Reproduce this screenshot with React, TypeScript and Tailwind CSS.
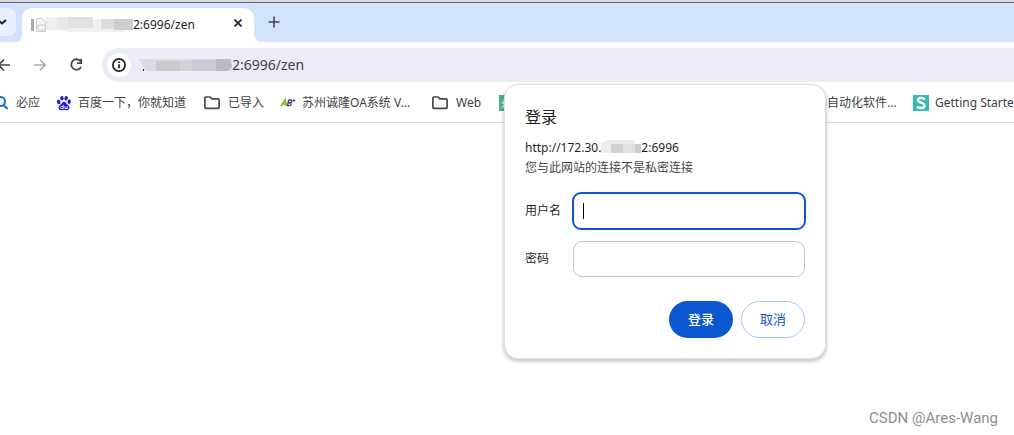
import React from "react";

type BookmarkProps = { icon: React.ReactNode; label: string; className: string };

const SearchIcon = () => (
  <svg className="h-4 w-4 shrink-0" viewBox="0 0 16 16" fill="none" stroke="#1a73c0" strokeWidth="2">
    <circle cx="8.500" cy="6.500" r="4.500" />
    <path d="M11.500 10 15.500 14" />
  </svg>
);

const BaiduIcon = () => (
  <svg className="h-4 w-4 shrink-0" viewBox="0 0 16 16" fill="#2319dc">
    <ellipse cx="2.700" cy="7" rx="1.800" ry="2.200" transform="rotate(-12 2.700 7)" />
    <ellipse cx="5.900" cy="3.200" rx="1.700" ry="2.300" />
    <ellipse cx="10.100" cy="3.200" rx="1.700" ry="2.300" transform="rotate(12 10.100 3.200)" />
    <ellipse cx="13.200" cy="6.700" rx="1.700" ry="2.200" transform="rotate(8 13.200 6.700)" />
    <path d="M8 6.700c1.600 0 2.200 1.600 3.200 2.700 1.200 1.100 2.500 1.800 2.300 3.600-.2 1.900-1.800 2.400-3.300 2.200-1.500-.2-2.800-.2-4.300 0-1.700.2-3.200-.6-3.300-2.300-.1-1.700.9-2.400 2.100-3.400C5.800 8.500 6.400 6.700 8 6.700Z" />
    <path d="M7.200 9.800v3.800H5.700a1 1 0 0 1 0-2.100h1.500M9 11.200v2.400h2.300v-2.400" fill="none" stroke="#fff" strokeWidth=".9" />
  </svg>
);

const FolderIcon = () => (
  <svg className="h-4 w-4 shrink-0" viewBox="0 0 16 16" fill="none" stroke="#47494d" strokeWidth="1.700">
    <path d="M.9 12.500V3.100c0-.7.4-1.100 1.100-1.100h4.200l1.700 1.900h6.100c.7 0 1.100.4 1.100 1.100v7.500c0 .6-.4.900-1 .9H1.900c-.6 0-1-.3-1-.9Z" />
  </svg>
);

const OaIcon = () => (
  <svg className="h-4 w-4 shrink-0" viewBox="0 0 16 16" fill="none">
    <path d="M1 11 5.200 4.800 6.200 11M3 9h3" stroke="#86b817" strokeWidth="1.700" />
    <path d="M8.700 5h1.900c1.900 0 1.500 2.700-.4 2.700H8.400h1.400c2.100 0 1.500 2.900-.5 2.900H7.600L8.700 5" stroke="#3c3f86" strokeWidth="1.400" />
    <path d="M12.700 5.500h2.600M14 4.200v2.600" stroke="#3c3f86" strokeWidth="1.100" />
  </svg>
);

const GreenIcon = () => (
  <svg className="h-4 w-4 shrink-0" viewBox="0 0 16 16">
    <path d="M0 0h16v16H0z" fill="#4bae94" />
    <path d="M3 13 6 9M3 7l3 3M5 4v3" stroke="#fff" strokeWidth="1.200" />
  </svg>
);

const SIcon = () => (
  <svg className="h-4 w-4 shrink-0" viewBox="0 0 16 16">
    <path d="M0 0h16v16H0z" fill="#34bcae" />
    <path d="M11.800 4.300C9.800 2.400 5 2.500 5 5.200c0 3 6.500 1.900 6.500 5.200 0 3.300-5.500 3.300-7.500 1.200" fill="none" stroke="#fff" strokeWidth="2.400" />
  </svg>
);

const Bookmark = ({ icon, label, className }: BookmarkProps) => (
  <a href="#" className={`flex h-6 shrink-0 items-center whitespace-nowrap ${className}`}>
    {icon}
    <span>{label}</span>
  </a>
);

const TabStrip = () => (
  <div className="flex h-[39px] items-end bg-[#d3e2fd]">
    <button aria-label="搜索标签页" className="mb-1.5 flex h-7 w-4 items-center justify-start rounded-r-lg bg-[#e9f0fe]">
      <svg className="h-2 w-2" viewBox="0 0 8 8" fill="none" stroke="#1f1f1f" strokeWidth="2">
        <path d="M-2 2 2 5.500 6 2" />
      </svg>
    </button>
    <svg className="-mr-1 h-2.5 w-2.5" viewBox="0 0 10 10" fill="#fff">
      <path d="M0 10C4 10 6 7 6 0h4v10Z" />
    </svg>
    <div className="flex h-[34px] w-[232px] items-center rounded-t-[10px] bg-white px-2">
      <svg className="h-4 w-[103px] shrink-0" viewBox="0 0 103 16">
        <path d="M1 2h3v12H1z" fill="#a9a9a9" />
        <path d="M6.500 1.500h6l3 3v10h-9zM8 8h7v5H8z" fill="#f5f5f5" stroke="#cfcfcf" />
        <path d="M16 0h47v2h40v10h-9v3H39l-9-2H16z" fill="#f0f0f0" />
        <path d="M27 1h11v11H27z" fill="#e8e8e8" />
        <path d="M38 0h25v11H38z" fill="#e1e1e1" />
        <path d="M71 2h13v10H71z" fill="#dcdcdc" />
        <path d="M84 2h19v11H84z" fill="#cecece" />
      </svg>
      <span className="flex-1 text-xs text-[#1f1f1f]">2:6996/zen</span>
      <button aria-label="关闭标签页" className="mb-1 flex h-4 w-4 items-center justify-center">
        <svg className="h-2 w-2" viewBox="0 0 8 8" stroke="#1f1f1f" strokeWidth="1.700">
          <path d="m.5.5 7 7m0-7-7 7" />
        </svg>
      </button>
    </div>
    <svg className="h-2.5 w-2.5" viewBox="0 0 10 10" fill="#fff">
      <path d="M0 0c0 7 3 10 10 10H0Z" />
    </svg>
    <button aria-label="新标签页" className="mb-2 ml-0.5 flex h-6 w-4 items-center justify-center">
      <svg className="h-3 w-3" viewBox="0 0 12 12" stroke="#474747" strokeWidth="1.600">
        <path d="M6 .5v11M.5 6h11" />
      </svg>
    </button>
  </div>
);

const Toolbar = () => (
  <div className="flex h-[43px] items-center pt-1 pb-0.5">
    <button aria-label="后退" className="flex h-6 w-3 items-center">
      <svg className="h-3 w-3" viewBox="0 0 12 12" fill="none" stroke="#474747" strokeWidth="1.700">
        <path d="M10 6H-1M4 .5-1.500 6 4 11.500" />
      </svg>
    </button>
    <button aria-label="前进" className="ml-5 flex h-6 w-4 items-center justify-center">
      <svg className="h-3 w-3" viewBox="0 0 12 12" fill="none" stroke="#ababab" strokeWidth="1.500">
        <path d="M0 6h11M6 .8 11.200 6 6 11.200" />
      </svg>
    </button>
    <button aria-label="重新加载" className="ml-5 flex h-6 w-4 items-center justify-center">
      <svg className="h-4 w-4" viewBox="0 0 16 16" fill="none" stroke="#474747" strokeWidth="1.800">
        <path d="M12.600 4.300A5.200 5.200 0 1 0 13 10M13.200 1.800v4.300H9" />
      </svg>
    </button>
    <div className="ml-[18px] flex h-[34px] flex-1 items-center rounded-l-full bg-[#e9edf7] pl-[5px]">
      <button aria-label="查看网站信息" className="flex h-6 w-6 items-center justify-center rounded-full bg-white">
        <svg className="h-4 w-4" viewBox="0 0 16 16" fill="none" stroke="#1f1f1f" strokeWidth="1.700">
          <circle cx="8" cy="8" r="6.100" />
          <path d="M8 7.200v4M8 4.400v1.700" />
        </svg>
      </button>
      <svg className="ml-2 h-4 w-[93px]" viewBox="0 0 93 16">
        <path d="M0 2h93v12H7z" fill="#d9dce3" />
        <path d="M17 4h24v10H17z" fill="#c8cacd" />
        <path d="M41 4h12v10H41z" fill="#d0d2d7" />
        <path d="M53 3h24v11H53z" fill="#c9cbd3" />
        <path d="M77 2h14l2 8-4 4H77z" fill="#b9bbc0" />
        <path d="M4 12h1v2H4z" fill="#333" />
      </svg>
      <span className="text-sm text-[#3f4145]">2:6996/zen</span>
    </div>
  </div>
);

const BookmarksBar = () => (
  <div className="flex h-[38px] items-center overflow-hidden border-b border-[#dcdcdc] pb-0.5 text-xs text-[#3f4145]">
    <Bookmark icon={<SearchIcon />} label="必应" className="-ml-2 w-16 gap-2" />
    <Bookmark icon={<BaiduIcon />} label="百度一下，你就知道" className="w-[148px] gap-1.5" />
    <Bookmark icon={<FolderIcon />} label="已导入" className="w-[76px] gap-2" />
    <Bookmark icon={<OaIcon />} label="苏州诚隆OA系统 V..." className="w-[152px] gap-1.5" />
    <Bookmark icon={<FolderIcon />} label="Web" className="w-[67px] gap-2" />
    <Bookmark icon={<GreenIcon />} label="" className="w-[316px] gap-2" />
    <Bookmark icon={null} label="和自动化软件..." className="w-[98px]" />
    <Bookmark icon={<SIcon />} label="Getting Started" className="gap-1.5" />
  </div>
);

const LoginDialog = () => (
  <form
    role="dialog"
    aria-label="登录"
    className="absolute top-[84px] left-[504px] w-[322px] rounded-[14px] border border-[#dfe1e0] bg-white py-5 pr-[19px] pl-5 text-xs text-[#1f1f1f] shadow-[0_2px_3px_1px_rgba(60,64,67,0.25)]"
  >
    <h1 className="text-base leading-6">登录</h1>
    <div className="mt-[9px] flex h-5 items-center">
      <span>http://172.30.</span>
      <svg className="h-4 w-10" viewBox="0 0 40 16">
        <path d="M0 3 8 0h26v4h6v9H0z" fill="#ededeb" />
        <path d="M10 4h12v9H10z" fill="#ccd2d5" />
        <path d="M22 4h12v9H22z" fill="#e2e1e2" />
        <path d="M34 4h6v9h-6z" fill="#c9ced0" />
      </svg>
      <span>2:6996</span>
    </div>
    <p className="h-5 leading-5 text-[#474747]">您与此网站的连接不是私密连接</p>
    <div className="mt-3.5 flex h-[38px] items-center">
      <label htmlFor="username" className="w-[47px]">用户名</label>
      <div className="relative flex-1">
        <input id="username" type="text" className="block h-[38px] w-full rounded-[9px] border-2 border-[#0b57d0] px-2 outline-none" />
        <span className="absolute top-[11px] left-[11px] h-4 w-px bg-black" />
      </div>
    </div>
    <div className="mt-[11px] flex h-9 items-center">
      <label htmlFor="password" className="w-12">密码</label>
      <input id="password" type="password" className="mr-px h-9 min-w-0 flex-1 rounded-[9px] border border-[#c7c7c7] px-2 outline-none" />
    </div>
    <div className="mt-6 mr-px flex justify-end gap-2 text-[13px]">
      <button type="button" className="h-[37px] w-16 rounded-full bg-[#0b57d0] font-medium text-white">登录</button>
      <button type="button" className="h-[37px] w-16 rounded-full border border-[#a8c7fa] text-[#0b57d0]">取消</button>
    </div>
  </form>
);

const App = () => (
  <div className="relative flex min-h-screen flex-col overflow-hidden bg-white font-['Noto_Sans','Noto_Sans_CJK_SC',sans-serif]">
    <header>
      <div className="h-[3px] border-b border-[#606468] bg-[#dedede]" />
      <TabStrip />
      <Toolbar />
      <BookmarksBar />
    </header>
    <main className="flex flex-1 items-end justify-end px-4 pb-[7px]">
      <p className="font-['Roboto',sans-serif] text-[15px] leading-5 text-[#8f8f8f]">CSDN @Ares-Wang</p>
    </main>
    <LoginDialog />
  </div>
);

export default App;
